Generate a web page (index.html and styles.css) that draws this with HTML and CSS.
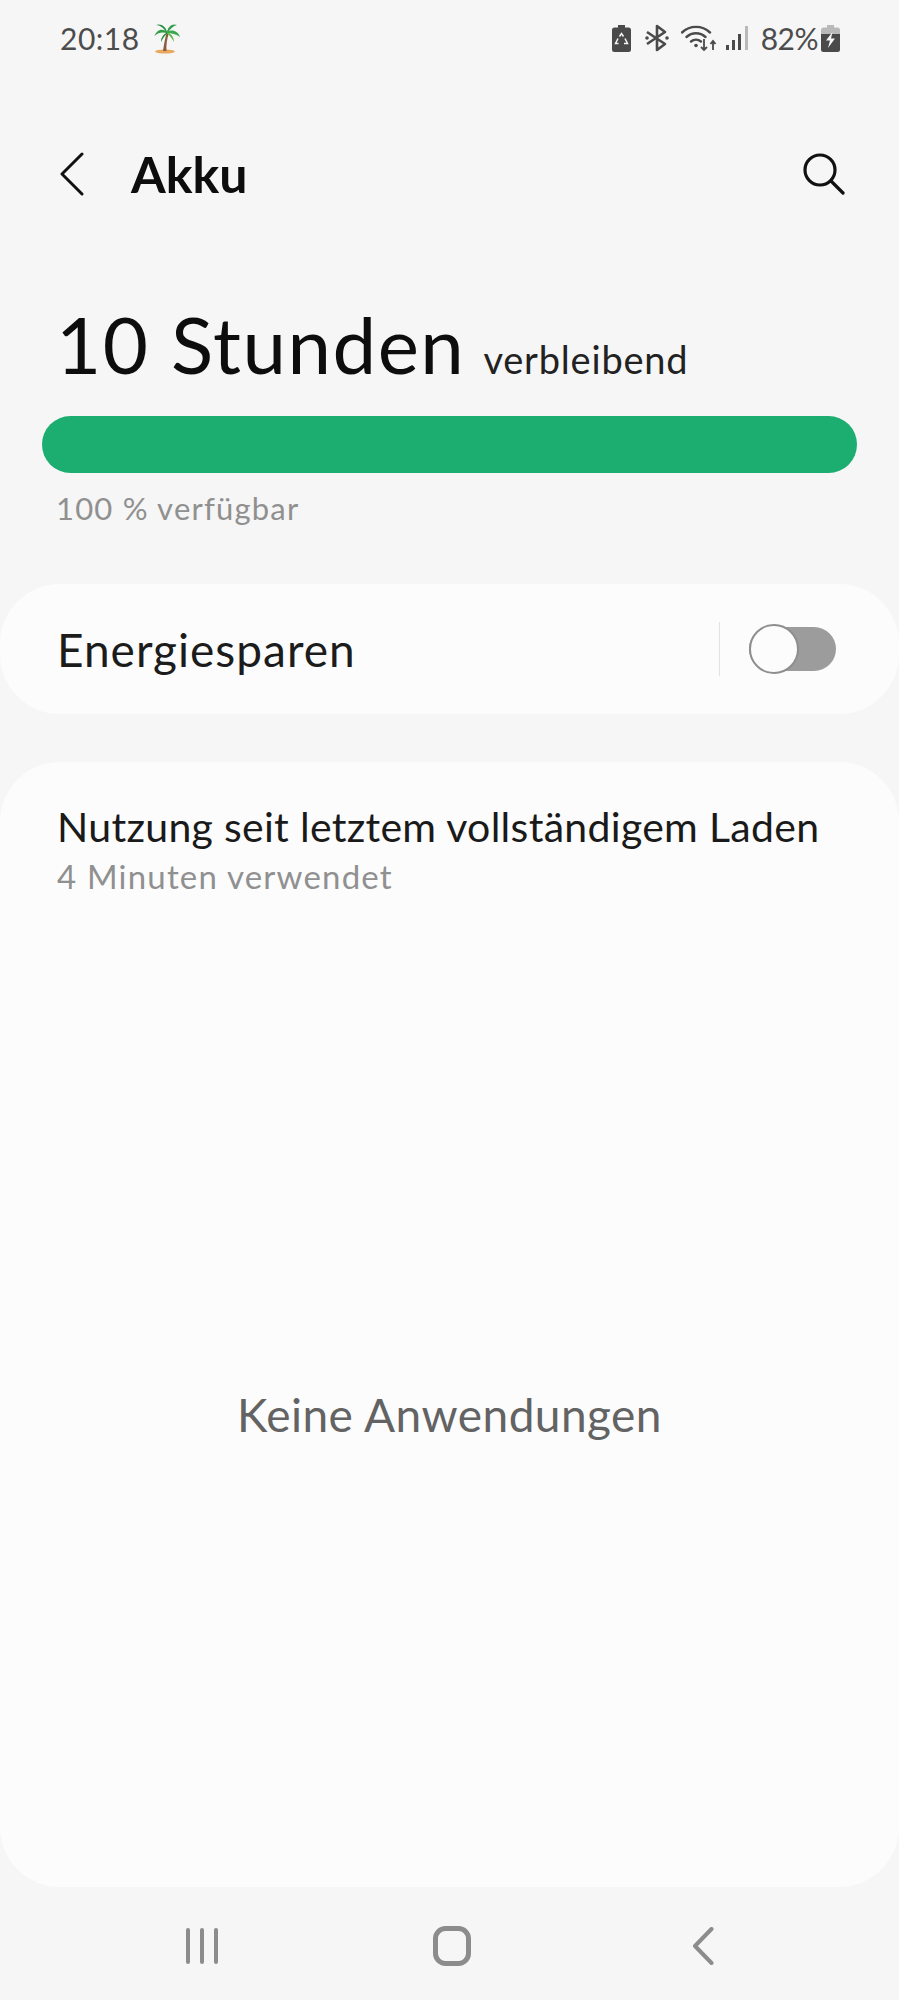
FILE: index.html
```html
<!DOCTYPE html>
<html lang="de">
<head>
<meta charset="utf-8">
<title>Akku</title>
<link rel="stylesheet" href="styles.css">
</head>
<body>
<div class="screen">
  <header class="status">
    <div class="status-left">
      <span class="time">20:18</span>
      <svg class="palm" viewBox="0 0 30 32" width="30" height="32">
        <ellipse cx="14" cy="29.5" rx="10" ry="2" fill="#e9a860"/>
        <path d="M12 29C13 22 14 16 16 10L18 10.500C16 17 15 23 15.500 29Z" fill="#8a5a3c"/>
        <path d="M16 10C12 6 6 7 3.500 14C7 10 12 10 16 11Z" fill="#2f9e44"/>
        <path d="M16 10C15 5 10 1 5 3C9 3 13 6 16 11Z" fill="#1f8a3b"/>
        <path d="M16 10C17 5 21 1 26 3C22 4 19 7 16.500 11Z" fill="#2f9e44"/>
        <path d="M16 10C21 7 27 9 29 15C25 12 20 11 16.500 11Z" fill="#3aa84c"/>
        <path d="M16 10.500C20 11 23 15 23 20C21 16 18 13 16 11.500Z" fill="#63b84a"/>
        <path d="M16 10.500C13 12 10 15 10 20C12 16 14 13 16.500 11.500Z" fill="#1f8a3b"/>
      </svg>
    </div>
    <div class="status-right">
      <svg class="ic-recycle" viewBox="0 0 19 27" width="19" height="27">
        <path d="M6 0H13V2.500H16.500A2.500 2.500 0 0 1 19 5V24.500A2.500 2.500 0 0 1 16.500 27H2.500A2.500 2.500 0 0 1 0 24.500V5A2.500 2.500 0 0 1 2.500 2.500H6Z" fill="#4a4a4a"/>
        <path d="M7.500 11.500L9.500 8.500L11.500 11.500M13 13.500L15.500 18.500H12M6.500 18.500H3.500L6 13.500" fill="none" stroke="#f6f6f6" stroke-width="1.500"/>
      </svg>
      <svg class="ic-bt" viewBox="0 0 24 28" width="24" height="28">
        <path d="M2 8L20 20L12 26V2L20 8L2 20" fill="none" stroke="#4a4a4a" stroke-width="2.600" stroke-linejoin="round"/>
        <circle cx="2" cy="14" r="1.800" fill="#4a4a4a"/>
        <circle cx="22" cy="14" r="1.800" fill="#4a4a4a"/>
      </svg>
      <svg class="ic-wifi" viewBox="0 0 36 28" width="36" height="28">
        <path d="M1 8.500C9 1 21 1 29 8.500M5.500 13C11 8 19 8 24.500 13M10 17.500C13 15 17 15 20 17.500" fill="none" stroke="#4a4a4a" stroke-width="2.400" stroke-linecap="round"/>
        <circle cx="15" cy="21.500" r="1.800" fill="#4a4a4a"/>
        <path d="M23 15V26M20 23L23 26L26 23M32 26V17M29.500 20L32 17L34.500 20" fill="none" stroke="#4a4a4a" stroke-width="1.800"/>
      </svg>
      <svg class="ic-signal" viewBox="0 0 23 26" width="23" height="26">
        <rect x="0" y="20" width="3" height="5" fill="#4a4a4a"/>
        <rect x="6" y="15" width="3" height="10" fill="#4a4a4a"/>
        <rect x="12" y="9" width="3" height="16" fill="#4a4a4a"/>
        <rect x="19" y="1" width="3" height="24" fill="#b9b9b9"/>
      </svg>
      <span class="percent">82%</span>
      <svg class="ic-batt" viewBox="0 0 19 27" width="19" height="27">
        <path d="M6 0H13V2.500H16.500A2.500 2.500 0 0 1 19 5V9H0V5A2.500 2.500 0 0 1 2.500 2.500H6Z" fill="#b9b9b9"/>
        <path d="M0 9H19V24.500A2.500 2.500 0 0 1 16.500 27H2.500A2.500 2.500 0 0 1 0 24.500Z" fill="#4a4a4a"/>
        <path d="M11.500 7L5 15.500H9L7 23L14 13.500H10Z" fill="#f6f6f6"/>
      </svg>
    </div>
  </header>

  <nav class="appbar">
    <div class="appbar-left">
      <svg class="back" viewBox="0 0 24 44" width="24" height="44">
        <path d="M22 2L2 22L22 42" fill="none" stroke="#111" stroke-width="3" stroke-linecap="round" stroke-linejoin="round"/>
      </svg>
      <h1 class="title">Akku</h1>
    </div>
    <svg class="search" viewBox="0 0 42 42" width="42" height="42">
      <circle cx="17" cy="17" r="15" fill="none" stroke="#111" stroke-width="3.200"/>
      <path d="M28 28L40 40" fill="none" stroke="#111" stroke-width="3.200" stroke-linecap="round"/>
    </svg>
  </nav>

  <section class="summary">
    <div class="remaining">
      <span class="hours">10 Stunden</span>
      <span class="remaining-label">verbleibend</span>
    </div>
    <div class="bar"></div>
    <div class="available">100 % verfügbar</div>
  </section>

  <section class="card saver">
    <span class="saver-label">Energiesparen</span>
    <div class="saver-control">
      <span class="divider"></span>
      <span class="toggle"><span class="knob"></span></span>
    </div>
  </section>

  <section class="card usage">
    <div class="usage-title">Nutzung seit letztem vollständigem Laden</div>
    <div class="usage-sub">4 Minuten verwendet</div>
    <div class="empty">Keine Anwendungen</div>
  </section>

  <footer class="navbar">
    <svg viewBox="0 0 34 36" width="34" height="36">
      <path d="M3 2V34M17 2V34M31 2V34" fill="none" stroke="#8c8c8c" stroke-width="4" stroke-linecap="round"/>
    </svg>
    <svg class="nav-home" viewBox="0 0 38 40" width="38" height="40">
      <rect x="2.500" y="2.500" width="33" height="35" rx="10" fill="none" stroke="#8c8c8c" stroke-width="5"/>
    </svg>
    <svg viewBox="0 0 24 38" width="24" height="38">
      <path d="M21.500 2L5 19L21.500 36" fill="none" stroke="#8c8c8c" stroke-width="4" stroke-linecap="round" stroke-linejoin="round"/>
    </svg>
  </footer>
</div>
</body>
</html>
```
FILE: styles.css
```css
* { box-sizing: border-box; }
html, body { margin: 0; padding: 0; }
body { background: #f6f6f6; font-family: "Lato", "Noto Sans", sans-serif; color: #111; }
.screen { width: 899px; height: 2000px; overflow: hidden; display: flex; flex-direction: column; }

.status { height: 136px; padding: 21px 59px 0 60px; display: flex; justify-content: space-between; align-items: flex-start; }
.status-left { display: flex; align-items: center; gap: 11px; height: 34px; }
.time { font-size: 30px; line-height: 34px; color: #4c4c4c; letter-spacing: 0.5px; }
.status-right { display: flex; align-items: center; height: 34px; }
.percent { font-size: 30px; line-height: 34px; color: #4c4c4c; margin: 0 3px 0 12px; letter-spacing: -0.5px; }
.ic-bt { margin-left: 14px; }
.ic-wifi { margin-left: 12px; }
.ic-signal { margin-left: 9px; }

.appbar { height: 76px; padding: 0 54px 0 60px; display: flex; justify-content: space-between; align-items: center; }
.appbar-left { display: flex; align-items: center; gap: 47px; }
.title { margin: 0; font-size: 50px; line-height: 54px; font-weight: 700; color: #0d0d0d; }

.summary { padding: 87px 42px 0; }
.remaining { display: flex; align-items: baseline; gap: 18px; padding-left: 14px; height: 117px; }
.hours { font-size: 78px; line-height: 90px; color: #0d0d0d; letter-spacing: 1.5px; }
.remaining-label { font-size: 38px; color: #222; letter-spacing: 0.8px; }
.bar { height: 57px; border-radius: 29px; background: #1cae70; }
.available { margin: 16px 0 0 14px; font-size: 31px; line-height: 38px; color: #909090; letter-spacing: 1.2px; }

.card { background: #fcfcfc; border-radius: 60px; }
.saver { height: 130px; margin-top: 57px; padding: 0 63px 0 57px; display: flex; justify-content: space-between; align-items: center; }
.saver-label { font-size: 46px; color: #1c1c1c; letter-spacing: 1px; }
.saver-control { display: flex; align-items: center; gap: 29px; }
.divider { width: 1px; height: 54px; background: #e2e2e2; }
.toggle { position: relative; display: block; width: 87px; height: 44px; border-radius: 22px; background: #9c9c9c; }
.knob { position: absolute; left: 0; top: -3px; width: 50px; height: 50px; border-radius: 50%; background: #fcfcfc; border: 2.500px solid #8e8e8e; }

.usage { height: 1125px; margin-top: 48px; padding: 39px 57px 0; display: flex; flex-direction: column; }
.usage-title { font-size: 41px; line-height: 52px; color: #1a1a1a; white-space: nowrap; letter-spacing: 0.3px; }
.usage-sub { font-size: 33px; line-height: 40px; margin-top: 3px; color: #909090; letter-spacing: 1.2px; }
.empty { margin-top: 491px; text-align: center; font-size: 46px; line-height: 56px; color: #636363; letter-spacing: 0.45px; }

.navbar { flex: 1; padding: 5px 185px 0; display: flex; justify-content: space-between; align-items: center; }
.nav-home { margin-right: 5px; }
```
